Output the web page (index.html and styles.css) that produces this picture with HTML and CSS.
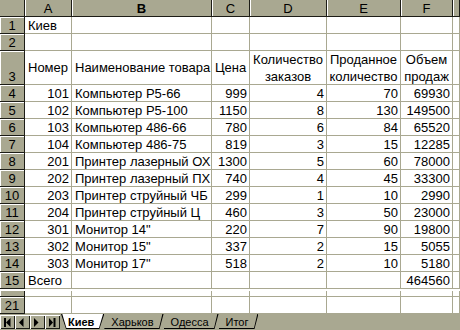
FILE: index.html
```html
<!DOCTYPE html>
<html lang="ru">
<head>
<meta charset="utf-8">
<title>Киев</title>
<link rel="stylesheet" href="styles.css">
</head>
<body>
<div class="app">
  <div class="sheet">
    <div class="corner"></div>
    <div class="ch">A</div><div class="ch b">B</div><div class="ch">C</div><div class="ch">D</div><div class="ch">E</div><div class="ch">F</div><div class="ch"></div>

    <div class="rh">1</div><div class="c">Киев</div><div class="c"></div><div class="c"></div><div class="c"></div><div class="c"></div><div class="c"></div><div class="c"></div>
    <div class="rh">2</div><div class="c"></div><div class="c"></div><div class="c"></div><div class="c"></div><div class="c"></div><div class="c"></div><div class="c"></div>

    <div class="rh">3</div>
    <div class="c mid">Номер</div>
    <div class="c mid">Наименование товара</div>
    <div class="c mid">Цена</div>
    <div class="c two"><span>Количество</span><span>заказов</span></div>
    <div class="c two"><span>Проданное</span><span>количество</span></div>
    <div class="c two"><span>Объем</span><span>продаж</span></div>
    <div class="c"></div>

    <div class="rh">4</div><div class="c n">101</div><div class="c">Компьютер Р5-66</div><div class="c n">999</div><div class="c n">4</div><div class="c n">70</div><div class="c n">69930</div><div class="c"></div>
    <div class="rh">5</div><div class="c n">102</div><div class="c">Компьютер Р5-100</div><div class="c n">1150</div><div class="c n">8</div><div class="c n">130</div><div class="c n">149500</div><div class="c"></div>
    <div class="rh">6</div><div class="c n">103</div><div class="c">Компьютер 486-66</div><div class="c n">780</div><div class="c n">6</div><div class="c n">84</div><div class="c n">65520</div><div class="c"></div>
    <div class="rh">7</div><div class="c n">104</div><div class="c">Компьютер 486-75</div><div class="c n">819</div><div class="c n">3</div><div class="c n">15</div><div class="c n">12285</div><div class="c"></div>
    <div class="rh">8</div><div class="c n">201</div><div class="c">Принтер лазерный ОХ</div><div class="c n">1300</div><div class="c n">5</div><div class="c n">60</div><div class="c n">78000</div><div class="c"></div>
    <div class="rh">9</div><div class="c n">202</div><div class="c">Принтер лазерный ПХ</div><div class="c n">740</div><div class="c n">4</div><div class="c n">45</div><div class="c n">33300</div><div class="c"></div>
    <div class="rh">10</div><div class="c n">203</div><div class="c">Принтер струйный ЧБ</div><div class="c n">299</div><div class="c n">1</div><div class="c n">10</div><div class="c n">2990</div><div class="c"></div>
    <div class="rh">11</div><div class="c n">204</div><div class="c">Принтер струйный Ц</div><div class="c n">460</div><div class="c n">3</div><div class="c n">50</div><div class="c n">23000</div><div class="c"></div>
    <div class="rh">12</div><div class="c n">301</div><div class="c">Монитор 14"</div><div class="c n">220</div><div class="c n">7</div><div class="c n">90</div><div class="c n">19800</div><div class="c"></div>
    <div class="rh">13</div><div class="c n">302</div><div class="c">Монитор 15"</div><div class="c n">337</div><div class="c n">2</div><div class="c n">15</div><div class="c n">5055</div><div class="c"></div>
    <div class="rh">14</div><div class="c n">303</div><div class="c">Монитор 17"</div><div class="c n">518</div><div class="c n">2</div><div class="c n">10</div><div class="c n">5180</div><div class="c"></div>
    <div class="rh">15</div><div class="c">Всего</div><div class="c"></div><div class="c"></div><div class="c"></div><div class="c"></div><div class="c n">464560</div><div class="c"></div>

    <div class="split"></div>

    <div class="rh part"></div><div class="c"></div><div class="c"></div><div class="c"></div><div class="c"></div><div class="c"></div><div class="c"></div><div class="c"></div>
    <div class="rh">21</div><div class="c"></div><div class="c"></div><div class="c"></div><div class="c"></div><div class="c"></div><div class="c"></div><div class="c"></div>
  </div>

  <div class="tabbar">
    <div class="nav">
      <span class="btn"><svg width="15" height="14" viewBox="0 0 15 14"><rect x="4" y="3" width="2" height="9" fill="#000"/><polygon points="10.5,3 10.5,12 6,7.5" fill="#000"/></svg></span>
      <span class="btn"><svg width="15" height="14" viewBox="0 0 15 14"><polygon points="8.5,3 8.5,12 4,7.5" fill="#000"/></svg></span>
      <span class="btn"><svg width="15" height="14" viewBox="0 0 15 14"><polygon points="4,3 4,12 8.5,7.5" fill="#000"/></svg></span>
      <span class="btn"><svg width="15" height="14" viewBox="0 0 15 14"><polygon points="4,3 4,12 8,7.5" fill="#000"/><rect x="8.5" y="3" width="2" height="9" fill="#000"/></svg></span>
    </div>
    <div class="tabs">
      <div class="tab active"><span>Киев</span></div>
      <div class="tab"><span>Харьков</span></div>
      <div class="tab"><span>Одесса</span></div>
      <div class="tab"><span>Итог</span></div>
    </div>
  </div>
</div>
</body>
</html>
```

FILE: styles.css
```css
:root {
  --face: #a9a891;
  --grid: #a9a891;
  --dark: #1c1c16;
}

html, body {
  margin: 0;
  padding: 0;
  background: #fff;
}

body {
  width: 460px;
  height: 330px;
  overflow: hidden;
  font-family: "Liberation Sans", Arial, sans-serif;
  font-size: 13px;
  color: #000;
}

.app {
  display: flex;
  flex-direction: column;
  width: 460px;
  height: 330px;
}

.sheet {
  display: grid;
  grid-template-columns: 25px 47px 140px 38px 77px 74px 52px 1fr;
  grid-template-rows: 17px 17px 17px 34px repeat(12, 17px) 2px 6px 17px;
}

.sheet > div {
  box-sizing: border-box;
  min-width: 0;
}

.corner {
  background: var(--face);
  border-right: 1px solid var(--dark);
  border-bottom: 1px solid var(--dark);
}

.ch {
  background: var(--face);
  border-right: 1px solid var(--dark);
  border-bottom: 1px solid var(--dark);
  box-shadow: inset 1px 0 0 #fff;
  display: flex;
  align-items: flex-end;
  justify-content: center;
  line-height: 14px;
  overflow: hidden;
}

.ch.b {
  font-weight: bold;
}

.rh {
  background: var(--face);
  border-right: 1px solid var(--dark);
  border-bottom: 1px solid var(--dark);
  box-shadow: inset 1px 1px 0 #fff;
  display: flex;
  align-items: flex-end;
  justify-content: center;
  line-height: 14px;
  overflow: hidden;
}

.rh.part {
  box-shadow: inset 1px 0 0 #fff;
}

.c {
  border-right: 1px solid var(--grid);
  border-bottom: 1px solid var(--grid);
  padding: 0 2px 0 3px;
  display: flex;
  align-items: flex-end;
  line-height: 14px;
  white-space: nowrap;
  overflow: hidden;
}

.c.n {
  justify-content: flex-end;
}

.c.mid {
  align-items: center;
  line-height: 17px;
}

.c.two {
  flex-direction: column;
  align-items: center;
  justify-content: center;
  line-height: 17px;
  padding: 0;
}

.split {
  grid-column: 1 / -1;
  background: #fff;
}

.tabbar {
  display: flex;
  height: 17px;
  background: var(--face);
}

.nav {
  display: flex;
  margin-top: 1px;
  margin-right: 1px;
}

.btn {
  display: block;
  width: 15px;
  height: 14px;
  box-sizing: border-box;
  background: var(--face);
  box-shadow: inset 1px 1px 0 #fff, inset -1px -1px 0 var(--dark);
}

.btn svg {
  display: block;
}

.tabs {
  display: flex;
  height: 15px;
}

.tab {
  position: relative;
  display: flex;
  align-items: flex-start;
  box-sizing: border-box;
  padding: 3px 10px 0 7px;
  height: 15px;
  font-size: 11px;
  line-height: 11px;
}

.tab::before,
.tab::after {
  content: "";
  position: absolute;
  inset: 0;
}

.tab::before {
  background: #000;
  clip-path: polygon(0 calc(100% - 1px), calc(100% - 4.5px) calc(100% - 1px), calc(100% - 1.2px) 0, 100% 0, calc(100% - 4px) 100%, 0 100%);
}

.tab span {
  position: relative;
  z-index: 1;
}

.tab.active {
  font-weight: bold;
  z-index: 2;
}

.tab.active::before {
  clip-path: polygon(0 0, 100% 0, calc(100% - 5px) 100%, 5px 100%);
}

.tab.active::after {
  background: #fff;
  clip-path: polygon(1.3px 0, calc(100% - 1.3px) 0, calc(100% - 5.4px) calc(100% - 1px), 5.4px calc(100% - 1px));
}
```
